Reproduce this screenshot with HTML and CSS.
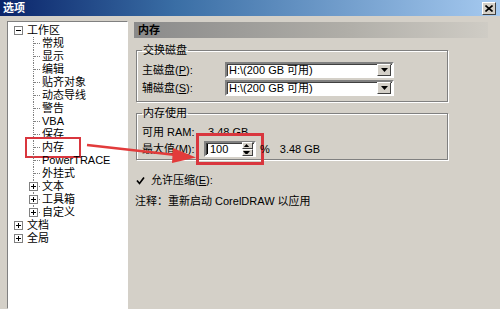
FILE: index.html
```html
<!DOCTYPE html>
<html lang="zh-CN">
<head>
    <meta charset="UTF-8">
    <meta name="viewport" content="width=device-width, initial-scale=1.0">
    <title>选项</title>
    <link rel="stylesheet" href="styles.css">
</head>
<body>
    <div class="window">
        <div class="titlebar">
            <span class="title">选项</span>
            <span class="close">
                <svg width="8" height="7" viewBox="0 0 8 7"><path d="M0.5 0.5L7.5 6.5M7.5 0.5L0.5 6.5" stroke="#000" stroke-width="1.6"/></svg>
            </span>
        </div>

        <div class="main">
            <div class="tree">
                <div class="root">
                    <svg class="box" width="9" height="9"><rect x=".5" y=".5" width="8" height="8" fill="#fff" stroke="#808080"/><path d="M2 4.5h5" stroke="#000"/></svg>
                    工作区
                </div>
                <div class="children">
                    <div class="leaf">常规</div>
                    <div class="leaf">显示</div>
                    <div class="leaf">编辑</div>
                    <div class="leaf">贴齐对象</div>
                    <div class="leaf">动态导线</div>
                    <div class="leaf">警告</div>
                    <div class="leaf">VBA</div>
                    <div class="leaf">保存</div>
                    <div class="leaf"><span class="hl">内存</span></div>
                    <div class="leaf">PowerTRACE</div>
                    <div class="leaf">外挂式</div>
                    <div class="leaf folder">
                        <svg class="box" width="9" height="9"><rect x=".5" y=".5" width="8" height="8" fill="#fff" stroke="#808080"/><path d="M2 4.5h5M4.5 2v5" stroke="#000"/></svg>
                        文本
                    </div>
                    <div class="leaf folder">
                        <svg class="box" width="9" height="9"><rect x=".5" y=".5" width="8" height="8" fill="#fff" stroke="#808080"/><path d="M2 4.5h5M4.5 2v5" stroke="#000"/></svg>
                        工具箱
                    </div>
                    <div class="leaf folder last">
                        <svg class="box" width="9" height="9"><rect x=".5" y=".5" width="8" height="8" fill="#fff" stroke="#808080"/><path d="M2 4.5h5M4.5 2v5" stroke="#000"/></svg>
                        自定义
                    </div>
                </div>
                <div class="root">
                    <svg class="box" width="9" height="9"><rect x=".5" y=".5" width="8" height="8" fill="#fff" stroke="#808080"/><path d="M2 4.5h5M4.5 2v5" stroke="#000"/></svg>
                    文档
                </div>
                <div class="root">
                    <svg class="box" width="9" height="9"><rect x=".5" y=".5" width="8" height="8" fill="#fff" stroke="#808080"/><path d="M2 4.5h5M4.5 2v5" stroke="#000"/></svg>
                    全局
                </div>
            </div>

            <div class="pane">
                <div class="pane-head">内存</div>

                <fieldset class="group swap">
                    <legend>交换磁盘</legend>
                    <div class="row">
                        <span class="label">主磁盘(<u>P</u>):</span>
                        <div class="combo">
                            <span class="combo-text">H:\(200 GB 可用)</span>
                            <span class="drop"><svg width="7" height="4"><path d="M0 0h7L3.5 4z" fill="#000"/></svg></span>
                        </div>
                    </div>
                    <div class="row">
                        <span class="label">辅磁盘(<u>S</u>):</span>
                        <div class="combo">
                            <span class="combo-text">H:\(200 GB 可用)</span>
                            <span class="drop"><svg width="7" height="4"><path d="M0 0h7L3.5 4z" fill="#000"/></svg></span>
                        </div>
                    </div>
                </fieldset>

                <fieldset class="group memory">
                    <legend>内存使用</legend>
                    <div class="row">
                        <span class="label short">可用 RAM:</span>
                        <span class="value">3.48 GB</span>
                    </div>
                    <div class="row">
                        <span class="label short">最大值(<u>M</u>):</span>
                        <div class="spin">
                            <span class="spin-text">100</span>
                            <span class="spin-btns">
                                <svg width="7" height="4"><path d="M3.5 0L7 4H0z" fill="#000"/></svg>
                                <svg width="7" height="4"><path d="M0 0h7L3.5 4z" fill="#000"/></svg>
                            </span>
                        </div>
                        <span class="pct">%</span>
                        <span class="value">3.48 GB</span>
                    </div>
                </fieldset>

                <div class="check-row">
                    <svg class="check" width="9" height="9"><path d="M1 4.5l2.5 3L8 1.5" fill="none" stroke="#000" stroke-width="1.7"/></svg>
                    <span>允许压缩(<u>E</u>):</span>
                </div>

                <div class="note">注释：重新启动 CorelDRAW 以应用</div>
            </div>
        </div>

        <!-- annotation arrow drawn over the dialog -->
        <svg class="arrow" width="500" height="309">
            <path d="M87 145L176 155" stroke="#e23b3b" stroke-width="2.4"/>
            <polygon points="196,157.5 173,148 172,163" fill="#e23b3b"/>
        </svg>
    </div>
</body>
</html>
```

FILE: styles.css
```css
body {
    margin: 0;
    font-family: "Liberation Sans", "Noto Sans CJK SC", sans-serif;
    font-size: 11px;
    line-height: 13px;
    color: #000;
    background-color: #d4d0c8;
}
.window {
    position: relative;
    width: 500px;
    height: 309px;
    overflow: hidden;
    background-color: #d4d0c8;
}
.titlebar {
    height: 16px;
    display: flex;
    align-items: center;
    justify-content: space-between;
    padding: 0 4px 0 3px;
    background: linear-gradient(to right, #0a246a, #3a6ea5 35%, #a6caf0);
}
.title {
    color: white;
    font-weight: bold;
}
.close {
    width: 12px;
    height: 11px;
    display: flex;
    align-items: center;
    justify-content: center;
    background: #d4d0c8;
    border: 1px solid;
    border-color: #fff #404040 #404040 #fff;
}
.main {
    display: flex;
    padding: 5px 0 0 7px;
    height: 288px;
}

/* tree */
.tree {
    width: 119px;
    background: white;
    border: 1px solid;
    border-color: #808080 #fff #fff #808080;
    padding-top: 2px;
}
.root {
    display: flex;
    align-items: center;
    height: 13px;
    padding-left: 6px;
}
.root .box {
    margin-right: 4px;
}
.leaf {
    position: relative;
    height: 13px;
    display: flex;
    align-items: center;
    padding-left: 34px;
}
.leaf::before {
    content: "";
    position: absolute;
    left: 25px;
    top: 0;
    bottom: 0;
    border-left: 1px dotted #808080;
}
.leaf.last::before {
    bottom: 6px;
}
.leaf::after {
    content: "";
    position: absolute;
    left: 26px;
    top: 6px;
    width: 6px;
    border-top: 1px dotted #808080;
}
.leaf.folder {
    padding-left: 21px;
}
.leaf .box {
    position: relative;
    z-index: 1;
    margin-right: 4px;
}
.hl {
    display: inline-block;
    padding: 0 13px;
    margin: 0 -13px;
    outline: 2px solid #d9363e;
    outline-offset: 2px;
}

/* right pane */
.pane {
    flex: 1;
    padding-left: 4px;
}
.pane-head {
    height: 16px;
    margin: 1px 12px 0 2px;
    padding-left: 4px;
    display: flex;
    align-items: center;
    font-weight: bold;
    background: linear-gradient(to right, #8a8a8a, #b0aea8 60%, #cfccc5);
}
.group {
    width: 300px;
    margin: 0 0 0 4px;
    padding: 5px 5px 5px 5px;
    border: 1px solid #808080;
    box-shadow: 1px 1px 0 #fff, inset 1px 1px 0 #fff;
}
.group legend {
    padding: 0 1px;
}
.swap {
    margin-top: 6px;
}
.memory {
    margin-top: 5px;
    padding-top: 6px;
    padding-bottom: 2px;
}
.row {
    display: flex;
    align-items: center;
    min-height: 13px;
}
.swap .row + .row {
    margin-top: 2px;
}
.memory .row + .row {
    margin-top: 2px;
}
.label {
    width: 83px;
    flex-shrink: 0;
}
.label.short {
    width: 62px;
}
.combo {
    width: 165px;
    height: 12px;
    display: flex;
    align-items: center;
    justify-content: space-between;
    background: white;
    border: 2px solid;
    border-color: #808080 #fff #fff #808080;
    box-shadow: inset 1px 1px 0 #404040;
}
.combo-text {
    padding-left: 2px;
}
.drop, .spin-btns svg {
    background: #d4d0c8;
    border: 1px solid;
    border-color: #fff #404040 #404040 #fff;
}
.drop {
    width: 12px;
    height: 10px;
    margin-right: 1px;
    display: flex;
    align-items: center;
    justify-content: center;
}
.value {
    padding-left: 4px;
}
.spin {
    width: 48px;
    height: 12px;
    display: flex;
    align-items: center;
    justify-content: space-between;
    background: white;
    border: 2px solid;
    border-color: #808080 #fff #fff #808080;
    box-shadow: inset 1px 1px 0 #404040;
    outline: 3px solid #d9363e;
    outline-offset: 5px;
}
.spin-text {
    padding-left: 2px;
    border-left: 1px solid #000;
    margin-left: 1px;
    line-height: 10px;
}
.spin-btns {
    display: flex;
    flex-direction: column;
    margin-right: 1px;
}
.spin-btns svg {
    width: 9px;
    height: 3px;
    padding: 1px 0;
}
.pct {
    margin-left: 4px;
    margin-right: 6px;
}
.check-row {
    display: flex;
    align-items: center;
    margin: 14px 0 0 4px;
}
.check {
    margin-right: 6px;
}
.note {
    margin: 8px 0 0 3px;
}
.arrow {
    position: absolute;
    left: 0;
    top: 0;
    pointer-events: none;
}
```
